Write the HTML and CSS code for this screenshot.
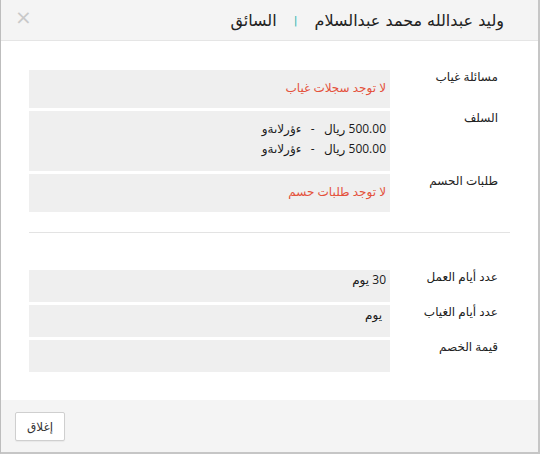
FILE: index.html
```html
<!DOCTYPE html>
<html lang="ar" dir="rtl">
<head>
<meta charset="utf-8">
<title>السائق</title>
<link rel="stylesheet" href="styles.css">
</head>
<body>
<div class="modal">
  <div class="modal-header">
    <h4 class="modal-title">وليد عبدالله محمد عبدالسلام <span class="sep">|</span> السائق</h4>
    <button class="close" type="button">×</button>
  </div>
  <div class="modal-body">
    <div class="group">
      <div class="field">
        <div class="label">مسائلة غياب</div>
        <div class="value value-tall red">لا توجد سجلات غياب</div>
      </div>
      <div class="field">
        <div class="label">السلف</div>
        <div class="value value-list">
          <div>500.00 ريال &nbsp; - &nbsp; ءؤرلاىةو</div>
          <div>500.00 ريال &nbsp; - &nbsp; ءؤرلاىةو</div>
        </div>
      </div>
      <div class="field">
        <div class="label">طلبات الحسم</div>
        <div class="value value-tall red">لا توجد طلبات حسم</div>
      </div>
    </div>
    <hr class="divider">
    <div class="group group-days">
      <div class="field">
        <div class="label">عدد أيام العمل</div>
        <div class="value value-short">30 يوم</div>
      </div>
      <div class="field">
        <div class="label">عدد أيام الغياب</div>
        <div class="value value-short"><span class="indent">يوم</span></div>
      </div>
      <div class="field">
        <div class="label">قيمة الخصم</div>
        <div class="value value-short"></div>
      </div>
    </div>
  </div>
  <div class="modal-footer">
    <button class="btn" type="button">إغلاق</button>
  </div>
</div>
</body>
</html>
```

FILE: styles.css
```css
html, body {
  margin: 0;
  padding: 0;
  background: #ffffff;
}

body {
  font-family: "Open Sans", "DejaVu Sans", sans-serif;
  font-size: 12px;
  color: #222;
}

.modal {
  width: 540px;
  height: 454px;
  box-sizing: border-box;
  border-left: 1px solid #bdbdbd;
  border-right: 2px solid #c6c6c6;
  border-bottom: 2px solid #c6c6c6;
  background: #fff;
  display: flex;
  flex-direction: column;
}

.modal-header {
  height: 40px;
  background: #f4f4f4;
  border-bottom: 1px solid #e5e5e5;
  display: flex;
  align-items: center;
  justify-content: space-between;
  padding: 0 34px 0 14px;
}

.modal-title {
  margin: 0;
  font-weight: normal;
  font-size: 16px;
  color: #222;
  font-family: "DejaVu Sans", sans-serif;
}

.sep {
  color: #2eb6b0;
  font-size: 11px;
  margin: 0 12px;
  vertical-align: 2px;
}

.close {
  border: 0;
  background: transparent;
  color: #c9c9c9;
  font-size: 20px;
  line-height: 1;
  padding: 0;
  margin-top: -6px;
  font-family: "DejaVu Sans", sans-serif;
}

.modal-body {
  flex: 1;
  padding: 29px 28px 0 28px;
}

.group {
  display: flex;
  flex-direction: column;
  gap: 3px;
}

.field {
  display: flex;
  align-items: flex-start;
}

.label {
  width: 108px;
  padding-right: 12px;
  flex-shrink: 0;
  line-height: 13px;
  color: #222;
}

.value {
  flex: 1;
  background: #efefef;
  padding: 0 4px 0 5px;
  line-height: 20px;
  color: #1a1a1a;
  box-sizing: border-box;
}

.value-tall {
  height: 38px;
  padding-top: 8px;
}

.value-list {
  height: 60px;
  padding-top: 8px;
}

.value-short {
  height: 32px;
  padding-top: 0;
}

.red {
  color: #e4513b;
}

.indent {
  margin-right: 4px;
}

.divider {
  border: 0;
  border-top: 1px solid #e3e3e3;
  margin: 20px 0 37px 0;
  height: 0;
}

.modal-footer {
  height: 52px;
  background: #f4f4f4;
  display: flex;
  align-items: center;
  justify-content: flex-end;
  padding: 0 14px;
}

.btn {
  width: 50px;
  height: 29px;
  background: #fff;
  border: 1px solid #cfcfcf;
  border-radius: 2px;
  box-shadow: 0 1px 1px rgba(0,0,0,0.05);
  font-family: "DejaVu Sans", sans-serif;
  font-size: 12px;
  color: #333;
  padding: 0;
  margin-top: 1px;
}
```
